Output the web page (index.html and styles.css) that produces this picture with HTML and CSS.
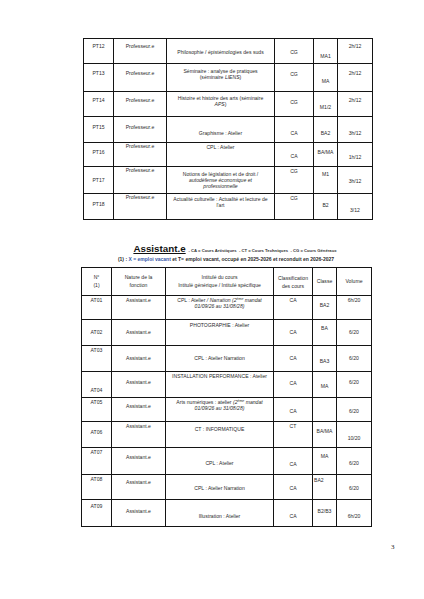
FILE: index.html
```html
<!DOCTYPE html>
<html lang="fr">
<head>
<meta charset="utf-8">
<title>Assistant.e</title>
<link rel="stylesheet" href="styles.css">
</head>
<body>
<div class="page">
  <div class="grid t1">
    <div class="v5">PT12</div><div class="v5">Professeur.e</div><div class="v11">Philosophie / épistémologies des suds</div><div class="v11">CG</div><div class="v15">MA1</div><div class="v5">2h/12</div>

    <div class="v7">PT13</div><div class="v7">Professeur.e</div><div class="v5">Séminaire : analyse de pratiques<br>(séminaire <i>LIENS</i>)</div><div class="v8">CG</div><div class="v15">MA</div><div class="v7">2h/12</div>

    <div class="v6">PT14</div><div class="v6">Professeur.e</div><div class="v4">Histoire et histoire des arts (séminaire<br><i>APS</i>)</div><div class="v8">CG</div><div class="v13">M1/2</div><div class="v6">2h/12</div>

    <div class="v8">PT15</div><div class="v8">Professeur.e</div><div class="v14">Graphisme : Atelier</div><div class="v14">CA</div><div class="v14">BA2</div><div class="v14">3h/12</div>

    <div class="v7">PT16</div><div class="v0">Professeur.e</div><div class="v2">CPL : Atelier</div><div class="v11">CA</div><div class="v7">BA/MA</div><div class="v12">1h/12</div>

    <div class="v11">PT17</div><div class="v1">Professeur.e</div><div class="v5">Notions de législation et de droit /<br><i>autodéfense économique et</i><br><i>professionnelle</i></div><div class="v2">CG</div><div class="v5">M1</div><div class="v12">3h/12</div>

    <div class="v8">PT18</div><div class="v0">Professeur.e</div><div class="v3">Actualité culturelle : Actualité et lecture de<br>l'art</div><div class="v2">CG</div><div class="v9">B2</div><div class="v14">3/12</div>
  </div>

  <div class="legend">
    <p class="l1"><span class="ttl">Assistant.e</span> <span class="key">- CA = Cours Artistiques &nbsp;- CT = Cours Techniques &nbsp;- CG = Cours Généraux</span></p>
    <p class="l2">(1) : <span class="blue">X = emploi vacant</span> et T= emploi vacant, occupé en 2025-2026 et reconduit en 2026-2027</p>
  </div>

  <div class="grid t2">
    <div class="v6 head">N°<br>(1)</div><div class="v6 head">Nature de la<br>fonction</div><div class="v6 head">Intitulé du cours<br>Intitulé générique / Intitulé spécifique</div><div class="v7 head">Classification<br>des cours</div><div class="v10 head">Classe</div><div class="v10 head">Volume</div>

    <div class="v2">AT01</div><div class="v2">Assistant.e</div><div class="v2">CPL : Atelier <i>/ Narration (2<sup>ème</sup> mandat<br>01/09/26 au 31/08/28)</i></div><div class="v2">CA</div><div class="v7">BA2</div><div class="v2">6h/20</div>

    <div class="v10">AT02</div><div class="v10">Assistant.e</div><div class="v3">PHOTOGRAPHIE : Atelier</div><div class="v10">CA</div><div class="v6">BA</div><div class="v10">6/20</div>

    <div class="v2">AT03</div><div class="v10">Assistant.e</div><div class="v10">CPL : Atelier Narration</div><div class="v10">CA</div><div class="v13">BA3</div><div class="v10">6/20</div>

    <div class="v16">AT04</div><div class="v8">Assistant.e</div><div class="v2">INSTALLATION PERFORMANCE : Atelier</div><div class="v9">CA</div><div class="v12">MA</div><div class="v8">6/20</div>

    <div class="v2">AT05</div><div class="v6">Assistant.e</div><div class="v2">Arts numériques : atelier <i>(2<sup>ème</sup> mandat<br>01/09/26 au 31/08/28)</i></div><div class="v11">CA</div><div></div><div class="v11">6/20</div>

    <div class="v8">AT06</div><div class="v2">Assistant.e</div><div class="v5">CT : INFORMATIQUE</div><div class="v2">CT</div><div class="v7">BA/MA</div><div class="v14">10/20</div>

    <div class="v2">AT07</div><div class="v7">Assistant.e</div><div class="v13">CPL : Atelier</div><div class="v14">CA</div><div class="v6">MA</div><div class="v13">6/20</div>

    <div class="v2">AT08</div><div class="v5">Assistant.e</div><div class="v11">CPL : Atelier Narration</div><div class="v11">CA</div><div class="v3 left">BA2</div><div class="v11">6/20</div>

    <div class="v4">AT09</div><div class="v9">Assistant.e</div><div class="v14">Illustration : Atelier</div><div class="v14">CA</div><div class="v9">B2/B3</div><div class="v14">6h/20</div>
  </div>

  <p class="pnum">3</p>
</div>
</body>
</html>
```

FILE: styles.css
```css
html, body {
  margin: 0;
  padding: 0;
  background: #ffffff;
}

body {
  font-family: "Liberation Sans", Arial, sans-serif;
  color: #2b2b2b;
}

.page {
  width: 424px;
  height: 599px;
  padding-top: 38px;
  box-sizing: border-box;
  position: relative;
}

/* tables drawn as grids: the 1px gaps show the dark background as rules */
.grid {
  display: grid;
  gap: 1px;
  padding: 1px;
  background: #141414;
  width: max-content;
}

.t1 {
  margin-left: 83px;
  grid-template-columns: 29px 52px 107px 38px 23px 34px;
  grid-template-rows: 24px 27px 24px 25px 23px 26px 25px;
}

.t2 {
  margin-left: 81px;
  margin-top: 5px;
  grid-template-columns: 29px 53px 107px 38px 23px 34px;
  grid-template-rows: 27px 23px 25px 25px 25px 23px 25px 26px 24px 26px;
}

.grid > div {
  background: #ffffff;
  text-align: center;
  font-size: 5.1px;
  line-height: 6px;
  white-space: nowrap;
  overflow: visible;
  min-width: 0;
}

.grid > .left { text-align: left; padding-left: 1px; }

.grid > .head { line-height: 8px; }

.grid sup {
  font-size: 3.5px;
  line-height: 0;
  vertical-align: 2px;
}

.grid > .v0 { padding-top: 0; }
.grid > .v1 { padding-top: 0; }
.grid > .v2 { padding-top: 1px; }
.grid > .v3 { padding-top: 2px; }
.grid > .v4 { padding-top: 3px; }
.grid > .v5 { padding-top: 4px; }
.grid > .v6 { padding-top: 5px; }
.grid > .v7 { padding-top: 6px; }
.grid > .v8 { padding-top: 7px; }
.grid > .v9 { padding-top: 8px; }
.grid > .v10 { padding-top: 9px; }
.grid > .v11 { padding-top: 10px; }
.grid > .v12 { padding-top: 11px; }
.grid > .v13 { padding-top: 12px; }
.grid > .v14 { padding-top: 13px; }
.grid > .v15 { padding-top: 14px; }
.grid > .v16 { padding-top: 15px; }

.legend {
  width: 290px;
  margin-left: 81px;
  margin-top: 23px;
  text-align: center;
}

.legend p {
  margin: 0;
  white-space: nowrap;
}

.l1 {
  font-size: 9.8px;
  line-height: 11px;
  padding-left: 18px;
}

.ttl {
  font-weight: bold;
  text-decoration: underline;
  color: #111111;
}

.key {
  font-size: 4.2px;
  font-weight: bold;
  color: #333333;
}

.l2 {
  margin-top: 4px;
  font-size: 5px;
  line-height: 6px;
  font-weight: bold;
  color: #2a2a2a;
}

.blue {
  color: #3556a8;
}

.pnum {
  margin: 0;
  position: absolute;
  left: 391px;
  top: 543px;
  font-family: "Liberation Serif", "Times New Roman", serif;
  font-size: 7px;
  line-height: 8px;
  color: #222222;
}
```
